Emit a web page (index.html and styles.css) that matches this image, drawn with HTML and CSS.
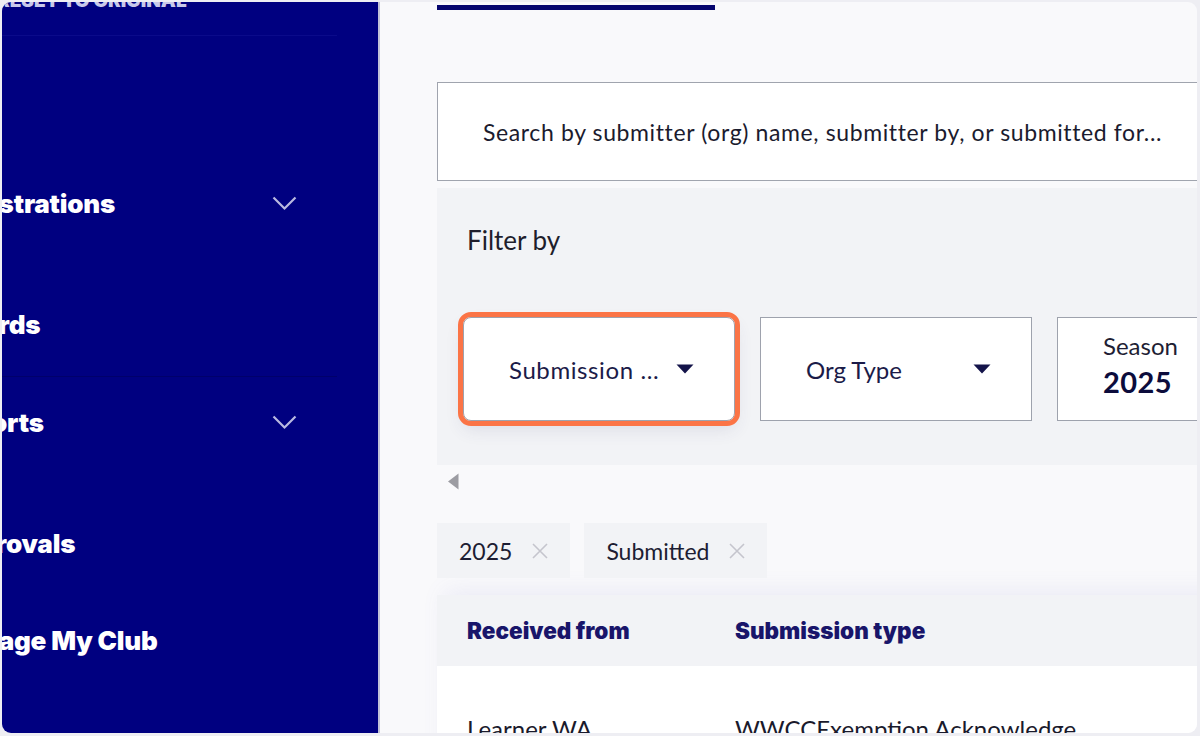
FILE: index.html
```html
<!DOCTYPE html>
<html lang="en">
<head>
<meta charset="utf-8">
<title>Submissions</title>
<link rel="stylesheet" href="styles.css">
</head>
<body>
<div class="frame">
  <aside class="sidebar">
    <div class="reset">RESET TO ORIGINAL</div>
    <div class="sidebar-rule"></div>
    <nav class="nav">
      <div class="nav-item nav-item--first">
        <span class="nav-label">Registrations</span>
        <svg class="chev" width="25" height="15" viewBox="0 0 25 15"><path d="M1.5 1.5 L12.5 12.5 L23.5 1.5" fill="none" stroke="#b9b9e0" stroke-width="2.2"/></svg>
      </div>
      <div class="nav-item">
        <span class="nav-label">Awards</span>
      </div>
      <div class="nav-divider"></div>
      <div class="nav-item nav-item--after-divider">
        <span class="nav-label">Reports</span>
        <svg class="chev" width="25" height="15" viewBox="0 0 25 15"><path d="M1.5 1.5 L12.5 12.5 L23.5 1.5" fill="none" stroke="#b9b9e0" stroke-width="2.2"/></svg>
      </div>
      <div class="nav-item">
        <span class="nav-label">Approvals</span>
      </div>
      <div class="nav-item nav-item--last">
        <span class="nav-label">Manage My Club</span>
      </div>
    </nav>
  </aside>
  <main class="main">
    <div class="tab-indicator"></div>
    <div class="search">Search by submitter (org) name, submitter by, or submitted for...</div>
    <section class="filters">
      <div class="filters-title">Filter by</div>
      <div class="filter-row">
        <div class="filter-btn filter-btn--active">
          <span class="filter-text filter-text--wide">Submission ...</span>
          <svg class="caret" width="18" height="10" viewBox="0 0 18 10"><path d="M0.5 0.5 H17.5 L9 9.5 Z" fill="#14144a"/></svg>
        </div>
        <div class="filter-btn">
          <span class="filter-text">Org Type</span>
          <svg class="caret" width="18" height="10" viewBox="0 0 18 10"><path d="M0.5 0.5 H17.5 L9 9.5 Z" fill="#14144a"/></svg>
        </div>
        <div class="filter-btn filter-btn--stack">
          <span class="season-label">Season</span>
          <span class="season-value">2025</span>
        </div>
      </div>
    </section>
    <div class="scroller">
      <svg width="12" height="17" viewBox="0 0 12 17"><path d="M11.5 0.5 V16.5 L1 8.5 Z" fill="#9c9ca2"/></svg>
    </div>
    <div class="chips">
      <div class="chip"><span>2025</span><svg class="x" width="16" height="16" viewBox="0 0 16 16"><path d="M1 1 L15 15 M15 1 L1 15" stroke="#c5c5cd" stroke-width="1.6"/></svg></div>
      <div class="chip"><span>Submitted</span><svg class="x" width="16" height="16" viewBox="0 0 16 16"><path d="M1 1 L15 15 M15 1 L1 15" stroke="#c5c5cd" stroke-width="1.6"/></svg></div>
    </div>
    <div class="table">
      <div class="table-head">
        <div class="cell cell--first">Received from</div>
        <div class="cell">Submission type</div>
      </div>
      <div class="table-row">
        <div class="cell cell--first">Learner WA</div>
        <div class="cell">WWCCExemption Acknowledge</div>
      </div>
    </div>
  </main>
</div>
</body>
</html>
```
FILE: styles.css
```css
* { box-sizing: border-box; }

html, body {
  margin: 0;
  padding: 0;
  background: #eeeef3;
  width: 1200px;
  height: 736px;
  overflow: hidden;
}

body {
  font-family: Lato, "Open Sans", sans-serif;
}

.frame {
  margin: 2px 3px 3px 2px;
  width: 1195px;
  height: 731px;
  border-radius: 9px;
  overflow: hidden;
  display: flex;
}

/* Sidebar */
.sidebar {
  flex: none;
  width: 378px;
  background: #000080;
  border-right: 2px solid #c2c2d8;
  overflow: hidden;
  font-family: Inter, Lato, sans-serif;
}

.reset {
  margin-top: -14px;
  height: 26px;
  font-weight: 900;
  font-size: 19px;
  color: #c8c8ea;
  line-height: 26px;
  white-space: nowrap;
  text-indent: -5px;
}

.sidebar-rule {
  margin-top: 21px;
  width: 335px;
  height: 1px;
  background: #0a0a8a;
}

.nav {
  display: flex;
  flex-direction: column;
}

.nav-item {
  display: flex;
  align-items: center;
  justify-content: space-between;
  height: 60px;
  width: 355px;
  margin-left: -60px;
  margin-top: 61px;
  color: #ffffff;
  font-weight: 900;
  font-size: 26px;
  letter-spacing: -0.2px;
  white-space: nowrap;
}

.nav-item--first { margin-top: 137px; }
.nav-item--after-divider { margin-top: 15px; }
.nav-item--last { margin-top: 37px; }

.nav-divider {
  margin-top: 22px;
  width: 335px;
  height: 1px;
  background: #00006a;
}

.chev { flex: none; }

/* Main */
.main {
  flex: 1;
  min-width: 0;
  background: #f9f9fb;
  padding-left: 57px;
  overflow: hidden;
}

.tab-indicator {
  margin-top: 3px;
  width: 278px;
  height: 5px;
  background: #05056e;
}

.search {
  margin-top: 72px;
  width: 900px;
  height: 99px;
  border: 1px solid #a0a4ae;
  background: #ffffff;
  padding-left: 45px;
  display: flex;
  align-items: center;
  font-size: 23px;
  letter-spacing: 0.62px;
  color: #1b1b2e;
  white-space: nowrap;
}

.filters {
  margin-top: 7px;
  width: 900px;
  height: 277px;
  background: #f2f3f6;
  padding: 36px 0 0 26px;
}

.filters-title {
  padding-left: 4px;
  font-size: 26px;
  line-height: 32px;
  color: #1e1e2c;
}

.filter-row {
  margin-top: 61px;
  display: flex;
  gap: 25px;
}

.filter-btn {
  flex: none;
  width: 272px;
  height: 104px;
  background: #ffffff;
  border: 1px solid #9ea2ad;
  display: flex;
  align-items: center;
  justify-content: space-between;
  padding: 0 40px 0 45px;
  color: #1b1b48;
  font-size: 24px;
  white-space: nowrap;
}

.filter-text--wide { letter-spacing: 0.6px; }

.filter-btn--active {
  border-radius: 8px;
  outline: 5px solid #fb7446;
  outline-offset: 0;
  box-shadow: 0 8px 18px rgba(60, 60, 110, 0.12);
}

.filter-btn--stack {
  flex-direction: column;
  align-items: flex-start;
  justify-content: flex-start;
  padding-top: 15px;
  gap: 7px;
}

.season-label {
  font-size: 24px;
  color: #1e1e34;
  line-height: 26px;
}

.season-value {
  font-size: 29px;
  font-weight: 700;
  color: #0c0c3c;
  line-height: 32px;
  letter-spacing: 0.4px;
}

.caret { flex: none; }

.scroller {
  height: 30px;
  padding: 8px 0 0 10px;
}

.scroller svg { display: block; }

.chips {
  margin-top: 28px;
  display: flex;
  gap: 14px;
}

.chip {
  height: 55px;
  background: #f2f3f6;
  display: flex;
  align-items: center;
  gap: 20px;
  padding: 0 22px 0 22px;
  font-size: 23px;
  color: #1d1d33;
}

.chip .x { flex: none; }

.table {
  margin-top: 17px;
  width: 900px;
  box-shadow: 0 -12px 22px -8px rgba(110, 110, 200, 0.10);
}

.table-head {
  height: 71px;
  background: #f2f3f6;
  display: flex;
  align-items: center;
  font-family: Inter, Lato, sans-serif;
  font-weight: 900;
  font-size: 22.5px;
  letter-spacing: 0;
  color: #19156a;
}

.table-row {
  height: 120px;
  background: #ffffff;
  display: flex;
  align-items: flex-start;
  padding-top: 48px;
  font-size: 24px;
  color: #1a1a2c;
}

.cell {
  width: 300px;
  white-space: nowrap;
}

.cell--first {
  width: 298px;
  padding-left: 30px;
}
```
